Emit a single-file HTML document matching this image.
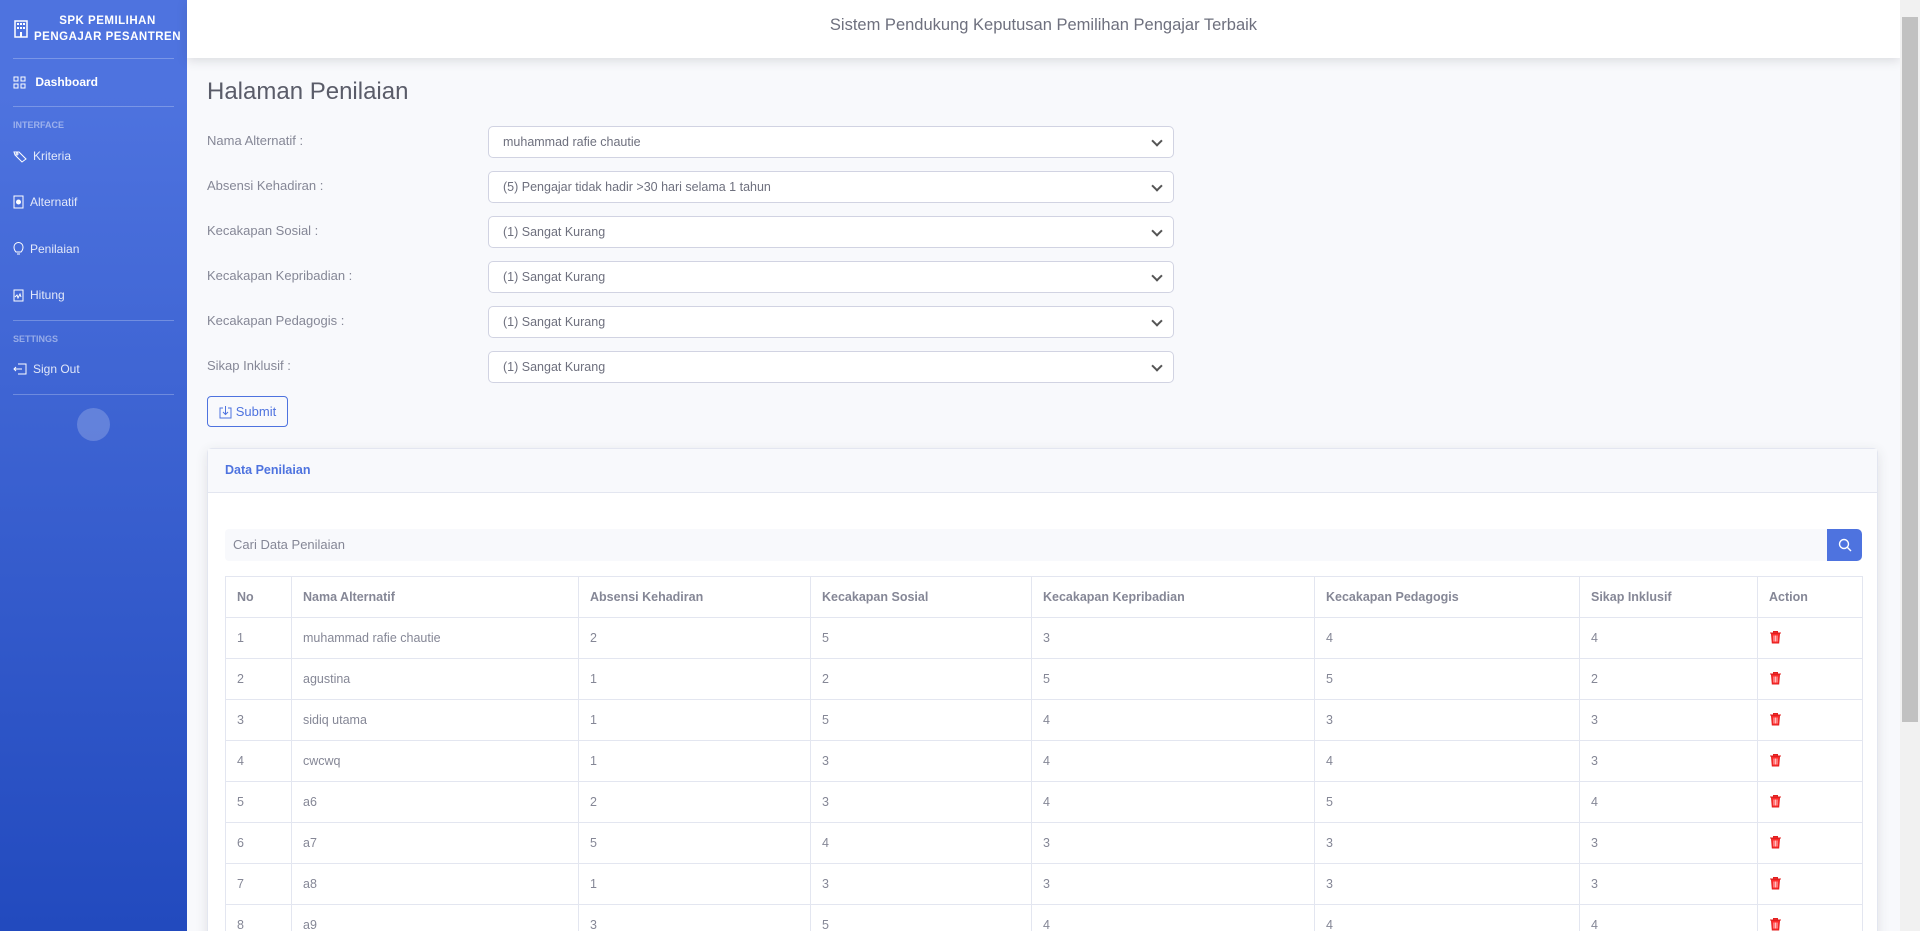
<!DOCTYPE html>
<html><head><meta charset="utf-8"><style>
*{box-sizing:border-box;margin:0;padding:0}
html,body{width:1920px;height:931px;overflow:hidden}
body{font-family:"Liberation Sans",sans-serif;color:#858796;background:#f8f9fc;position:relative;font-size:13px}
#wrap{position:absolute;left:0;top:0;width:1920px;height:931px;overflow:hidden}
.sb{position:absolute;left:0;top:0;width:187px;height:931px;background:linear-gradient(180deg,#4e73df 10%,#224abe 100%);color:#fff}
.sb>*{position:absolute;left:0;width:187px}
.brand{top:0;height:58px;display:flex;align-items:center;padding-left:14px;font-weight:700;font-size:11.5px;letter-spacing:.5px;line-height:16px;text-align:center}
.hr{left:13px!important;width:161px!important;border-top:1px solid rgba(255,255,255,.25)}
.it{height:30px;display:flex;align-items:center;padding-left:13px;font-size:12px;color:rgba(255,255,255,.85)}
.it svg{margin-right:6px}
.hd{font-size:9px;font-weight:700;color:rgba(255,255,255,.45);padding-left:13px;height:12px;line-height:12px}
.top{position:absolute;left:187px;top:0;width:1713px;height:58px;background:#fff;box-shadow:0 3px 10px rgba(58,59,69,.15);text-align:center;line-height:50px;font-size:16.5px;color:#6e707e}
h1{position:absolute;left:207px;top:78px;font-size:24px;font-weight:400;color:#5a5c69}
.lb{position:absolute;left:207px;font-size:13px}
.sel{position:absolute;left:488px;width:686px;height:32px;background:#fff;border:1px solid #d1d3e2;border-radius:5px;padding-left:14px;line-height:30px;font-size:12.5px;color:#6e707e}
.sel:after{content:"";position:absolute;right:12px;top:10px;width:6px;height:6px;border-right:2px solid #555;border-bottom:2px solid #555;transform:rotate(45deg)}
.btn{position:absolute;left:207px;top:396px;width:81px;height:31px;border:1px solid #4e73df;border-radius:4px;color:#4e73df;font-size:13px;display:flex;align-items:center;justify-content:center;gap:4px}
.card{position:absolute;left:207px;top:448px;width:1671px;height:520px;background:#fff;border:1px solid #e3e6f0;border-radius:5px;box-shadow:0 3px 12px rgba(58,59,69,.12)}
.ch{height:44px;background:#f8f9fc;border-bottom:1px solid #e3e6f0;color:#4e73df;font-weight:700;font-size:12.5px;padding-left:17px;line-height:42px}
.srch{position:absolute;left:17px;top:80px;width:1637px;height:32px;background:#f8f9fc;border-radius:4px;font-size:13px;line-height:32px;padding-left:8px;color:#858796}
.sbt{position:absolute;right:0;top:0;width:35px;height:32px;background:#4e73df;border-radius:0 5px 5px 0;display:flex;align-items:center;justify-content:center}
table{position:absolute;left:17px;top:127px;border-collapse:collapse;font-size:12.5px}
td,th{border:1px solid #e3e6f0;height:41px;padding-left:11px;text-align:left}
th{font-weight:700;color:#858796}
.sc{position:absolute;right:0;top:0;width:20px;height:931px;background:#f1f1f1}
.th{position:absolute;right:2px;top:17px;width:16px;height:705px;background:#c1c1c1}
</style></head><body><div id="wrap">
<div class="sb">
<div class="brand"><svg width="14" height="18" viewBox="0 0 14 18"><rect x="1" y="1" width="12" height="16" fill="none" stroke="#fff" stroke-width="1.5"/><g fill="#fff"><rect x="3" y="3" width="2" height="2"/><rect x="6" y="3" width="2" height="2"/><rect x="9" y="3" width="2" height="2"/><rect x="3" y="7" width="2" height="2"/><rect x="6" y="7" width="2" height="2"/><rect x="9" y="7" width="2" height="2"/><rect x="6" y="12" width="2" height="5"/></g></svg><div style="flex:1">SPK PEMILIHAN<br>PENGAJAR PESANTREN</div></div>
<div class="hr" style="top:58px"></div>
<div class="it" style="top:67px;color:#fff;font-weight:700"><svg width="13" height="13" viewBox="0 0 13 13" fill="none" stroke="#fff"><rect x="1" y="1" width="4" height="4"/><rect x="8" y="1" width="4" height="4"/><rect x="1" y="8" width="4" height="4"/><rect x="8" y="8" width="4" height="4"/></svg>&nbsp;Dashboard</div>
<div class="hr" style="top:106px"></div>
<div class="hd" style="top:119px">INTERFACE</div>
<div class="it" style="top:141px"><svg width="14" height="13" viewBox="0 0 14 13" fill="none" stroke="#fff"><path d="M1 2h5l7 7-4 3-7-7z"/><circle cx="4" cy="4" r="1"/></svg>Kriteria</div>
<div class="it" style="top:187px"><svg width="11" height="14" viewBox="0 0 11 14" fill="none" stroke="#fff"><rect x="1" y="1" width="9" height="12"/><circle cx="5.5" cy="7" r="2" fill="#fff"/></svg>Alternatif</div>
<div class="it" style="top:234px"><svg width="11" height="14" viewBox="0 0 11 14" fill="none" stroke="#fff"><path d="M3 10C1 8 1 6 1 5a4.5 4.5 0 019 0c0 1 0 3-2 5zM4 12h3"/></svg>Penilaian</div>
<div class="it" style="top:280px"><svg width="11" height="14" viewBox="0 0 11 14" fill="none" stroke="#fff"><rect x="1" y="2" width="9" height="11"/><path d="M2 9l2-2 1 3 2-4 1 3"/></svg>Hitung</div>
<div class="hr" style="top:320px"></div>
<div class="hd" style="top:333px">SETTINGS</div>
<div class="it" style="top:354px"><svg width="14" height="12" viewBox="0 0 14 12" fill="none" stroke="#fff"><path d="M5 1h8v10H5M1 6h8M3 4L1 6l2 2"/></svg>Sign Out</div>
<div class="hr" style="top:394px"></div>
<div style="top:408px;left:77px!important;width:33px;height:33px;border-radius:50%;background:rgba(255,255,255,.2)"></div>
</div>
<div class="top">Sistem Pendukung Keputusan Pemilihan Pengajar Terbaik</div>
<h1>Halaman Penilaian</h1>
<div class="lb" style="top:133px">Nama Alternatif :</div><div class="sel" style="top:126px">muhammad rafie chautie</div>
<div class="lb" style="top:178px">Absensi Kehadiran :</div><div class="sel" style="top:171px">(5) Pengajar tidak hadir &gt;30 hari selama 1 tahun</div>
<div class="lb" style="top:223px">Kecakapan Sosial :</div><div class="sel" style="top:216px">(1) Sangat Kurang</div>
<div class="lb" style="top:268px">Kecakapan Kepribadian :</div><div class="sel" style="top:261px">(1) Sangat Kurang</div>
<div class="lb" style="top:313px">Kecakapan Pedagogis :</div><div class="sel" style="top:306px">(1) Sangat Kurang</div>
<div class="lb" style="top:358px">Sikap Inklusif :</div><div class="sel" style="top:351px">(1) Sangat Kurang</div>
<div class="btn"><svg width="13" height="14" viewBox="0 0 13 14" fill="none" stroke="#4e73df"><path d="M4 3H1v10h11V3H9M6.5 1v8M4 7l2.5 2.5L9 7"/></svg>Submit</div>
<div class="card"><div class="ch">Data Penilaian</div>
<div class="srch">Cari Data Penilaian<div class="sbt"><svg width="14" height="14" viewBox="0 0 14 14" fill="none" stroke="#fff" stroke-width="1.4"><circle cx="6" cy="6" r="4.5"/><path d="M9.5 9.5L13 13"/></svg></div></div>
<table>
<tr><th style="width:66px">No</th><th style="width:287px">Nama Alternatif</th><th style="width:232px">Absensi Kehadiran</th><th style="width:221px">Kecakapan Sosial</th><th style="width:283px">Kecakapan Kepribadian</th><th style="width:265px">Kecakapan Pedagogis</th><th style="width:178px">Sikap Inklusif</th><th style="width:105px">Action</th></tr>
<tr><td>1</td><td>muhammad rafie chautie</td><td>2</td><td>5</td><td>3</td><td>4</td><td>4</td><td>T</td></tr>
<tr><td>2</td><td>agustina</td><td>1</td><td>2</td><td>5</td><td>5</td><td>2</td><td>T</td></tr>
<tr><td>3</td><td>sidiq utama</td><td>1</td><td>5</td><td>4</td><td>3</td><td>3</td><td>T</td></tr>
<tr><td>4</td><td>cwcwq</td><td>1</td><td>3</td><td>4</td><td>4</td><td>3</td><td>T</td></tr>
<tr><td>5</td><td>a6</td><td>2</td><td>3</td><td>4</td><td>5</td><td>4</td><td>T</td></tr>
<tr><td>6</td><td>a7</td><td>5</td><td>4</td><td>3</td><td>3</td><td>3</td><td>T</td></tr>
<tr><td>7</td><td>a8</td><td>1</td><td>3</td><td>3</td><td>3</td><td>3</td><td>T</td></tr>
<tr><td>8</td><td>a9</td><td>3</td><td>5</td><td>4</td><td>4</td><td>4</td><td>T</td></tr>
</table></div>
<div class="sc"><div class="th"></div></div>
</div>
<script>
document.querySelectorAll('td').forEach(function(t){if(t.textContent==='T'){t.innerHTML='<svg width="13" height="14" viewBox="0 0 13 14"><path d="M1 3h11M4.5 3V1.5h4V3M2.5 3.5l.8 9.5h6.4l.8-9.5z" fill="#ff2b2b" stroke="#e02020"/><path d="M5 5.5v6M6.5 5.5v6M8 5.5v6" stroke="#fff" stroke-width=".7"/></svg>';}});
</script>
</body></html>
